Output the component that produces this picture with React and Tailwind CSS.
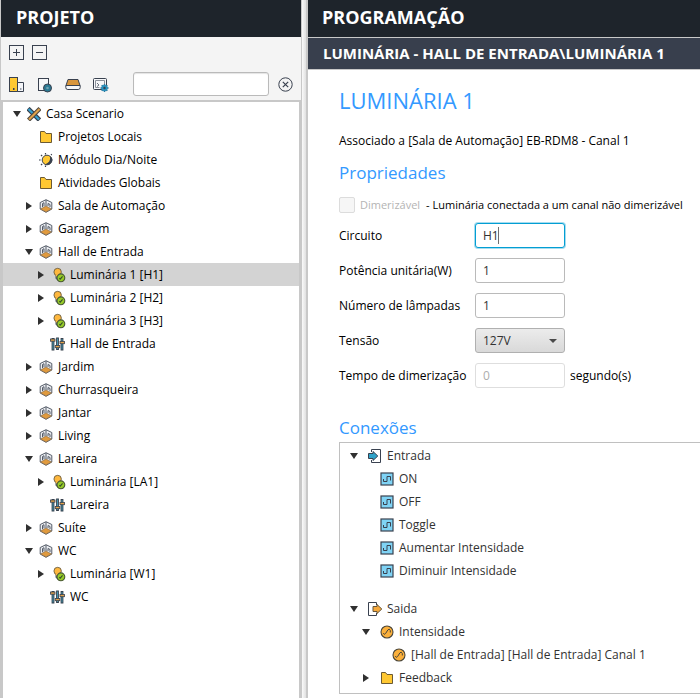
const T = "#303030";
const N = "#39414f";

function PlusBox({ minus }) {
  return (
    <svg width="15" height="15" viewBox="0 0 15 15" fill="none" stroke={N}>
      <rect x="0.5" y="0.5" width="14" height="14" />
      <path d={minus ? "M4 7.5h7" : "M4 7.5h7M7.5 4v7"} />
    </svg>
  );
}

function Buildings() {
  return (
    <svg width="16" height="16" viewBox="0 0 16 16" stroke={N}>
      <rect x="0.5" y="0.5" width="8" height="14" fill="#ffc832" />
      <path d="M8.5 5.5h6v9h-6z" fill="#f4f5f8" />
      <path d="M4 11h1.500v2h-1.500z" fill={N} stroke="none" />
      <path d="M11 11h1.500v2h-1.500z" fill="#9aa0aa" stroke="none" />
    </svg>
  );
}

function PageDisc() {
  return (
    <svg width="16" height="16" viewBox="0 0 16 16" stroke={N}>
      <rect x="1.5" y="1.5" width="10" height="12" fill="#f6f7f9" />
      <circle cx="10.500" cy="11" r="4" fill="#2b7a94" />
      <circle cx="10.500" cy="11" r="1.300" fill="#6fa3b3" stroke="none" />
    </svg>
  );
}

function Device() {
  return (
    <svg width="16" height="16" viewBox="0 0 16 16" stroke={N} strokeLinejoin="round">
      <path d="M3 2.500h10l2 6h-14z" fill="#d9963c" />
      <path d="M0.800 8.500h14.400v2q0 2-2 2h-10.400q-2 0-2-2z" fill="#f6f7f9" />
    </svg>
  );
}

function ScreenGear() {
  return (
    <svg width="16" height="16" viewBox="0 0 16 16" stroke={N}>
      <rect x="0.5" y="1.5" width="13" height="11" rx="1" fill="#f6f7f9" />
      <path d="M2.500 3.500h9v4M2.500 3.500v7h4" fill="none" stroke="#8b909a" />
      <path d="M4 6l2 2l-2 1.500" fill="none" stroke="#6b717c" />
      <path d="M11.500 7v8M7.500 11h8M8.700 8.200l5.600 5.600M14.300 8.200l-5.600 5.600" strokeWidth="1.500" stroke="#286f93" />
      <circle cx="11.500" cy="11" r="2.800" fill="#2b93be" stroke="#2b93be" />
      <circle cx="11.500" cy="11" r="1.200" fill={N} stroke="none" />
    </svg>
  );
}

function Clear() {
  return (
    <svg width="15" height="15" viewBox="0 0 15 15" fill="none" stroke={N}>
      <circle cx="7.5" cy="7.5" r="6.700" />
      <path d="M4.800 4.800l5.400 5.400M10.200 4.800l-5.400 5.400" strokeWidth="1.200" />
    </svg>
  );
}

function Tools() {
  return (
    <svg width="14" height="14" viewBox="0 0 14 14">
      <path d="M1 1.500l11.500 11.500" stroke="#37404d" strokeWidth="4.600" />
      <path d="M1.500 2l10.500 10.500" stroke="#35a0cf" strokeWidth="2.200" />
      <path d="M13 1.500l-11.500 11.500" stroke="#4c463e" strokeWidth="4.200" />
      <path d="M12.500 2l-10.500 10.500" stroke="#e0a24a" strokeWidth="2.200" />
    </svg>
  );
}

function Folder() {
  return (
    <svg width="14" height="14" viewBox="0 0 14 14">
      <path d="M1.500 1.500h4l1.500 2h5.500v9h-11z" fill="#ffc832" stroke="#6b5a34" />
    </svg>
  );
}

function Sun() {
  return (
    <svg width="14" height="14" viewBox="0 0 14 14">
      <circle cx="8" cy="7" r="4.800" fill="#ffc832" stroke={N} />
      <path d="M11 3q1 6-4.500 8.200q3 1.500 5.500-1t.800-5.400z" fill={N} />
      <path d="M0 7h1.600M2 2l1.200 1.200M2 12l1.200-1.200M6.500 0v1.500M6.500 12.500v1.500M12 2l.8-.8" stroke={N} strokeWidth="1.200" />
    </svg>
  );
}

function Room() {
  return (
    <svg width="14" height="14" viewBox="0 0 14 14" strokeLinejoin="round">
      <path d="M7 .7l5.800 2.800v6.500l-5.800 3.300l-5.800-3.300v-6.500z" fill="#eceef2" stroke="#555c68" />
      <path d="M7 7l5.600 3l-5.600 3l-5.600-3z" fill="#e09a3e" stroke="#7b6448" strokeWidth=".6" />
      <path d="M7 1v6M3.500 8v-3.500l1.500-.8v3.500M9 7v-2.500l2 1v2.500" fill="none" stroke="#555c68" />
    </svg>
  );
}

function Bulb() {
  return (
    <svg width="14" height="16" viewBox="0 0 14 16" className="ml-1">
      <path d="M3.200 8v3.500l2.800 3h3v-6.500z" fill="#77808c" stroke={N} strokeWidth=".9" />
      <circle cx="5" cy="4.800" r="4" fill="#ffb83e" stroke="#5f5540" strokeWidth=".9" />
      <path d="M3 7.500h4v2h-4z" fill="#ffb83e" />
      <circle cx="8.500" cy="11" r="4.200" fill="#96cc28" stroke="#4a5a34" strokeWidth="1.200" />
      <path d="M6.800 11.500l1 1l2.500-3" fill="none" stroke="#37502a" strokeWidth="1.200" />
    </svg>
  );
}

function Sliders() {
  return (
    <svg width="15" height="14" viewBox="0 0 15 14">
      <path d="M3 1v12.500M7.500 0.500v12.500M12 1v12.500" stroke="#37404d" strokeWidth="2.800" />
      <path d="M3 2v10.500M7.500 1.500v10.500M12 2v10.500" stroke="#4394ad" />
      <g fill="#e0a24a" stroke="#37404d" strokeWidth=".8">
        <rect x="0.500" y="2" width="4.500" height="2.200" />
        <rect x="5.200" y="8.500" width="4.600" height="2.200" />
        <rect x="10" y="4.500" width="4.500" height="2.200" />
      </g>
    </svg>
  );
}

function InArrow() {
  return (
    <svg width="14" height="14" viewBox="0 0 14 14">
      <path d="M3.500 3v-2.500h9v13h-9v-2.500" fill="#fff" stroke={N} />
      <path d="M.5 4.500h4.500v-2l4.800 4.500l-4.800 4.500v-2h-4.500z" fill="#2fa3c9" stroke={N} />
    </svg>
  );
}

function OutArrow() {
  return (
    <svg width="16" height="14" viewBox="0 0 16 14">
      <path d="M9.500 3v-2.500h-8v13h8v-2.500" fill="#fff" stroke={N} />
      <path d="M6 4.500h4v-2l4.800 4.500l-4.800 4.500v-2h-4z" fill="#f5a93c" stroke="#66563c" />
    </svg>
  );
}

function Digital() {
  return (
    <svg width="14" height="14" viewBox="0 0 14 14">
      <rect x="1" y="1" width="12" height="12" fill="#7fd3f5" stroke={N} strokeWidth="1.200" />
      <path d="M3.500 7v2.500h3.500v-5h3.500v4" fill="none" stroke={N} />
    </svg>
  );
}

function Analog() {
  return (
    <svg width="14" height="14" viewBox="0 0 14 14">
      <circle cx="7" cy="7" r="6" fill="#fbb03b" stroke="#4a4538" strokeWidth="1.100" />
      <path d="M3.300 8q1 2.500 2.300 .5l2.200-3.500q1.500-2 2.500 .5v2" fill="none" stroke="#4a4538" />
    </svg>
  );
}

function Arrow({ open }) {
  return (
    <svg width="8" height="8" viewBox="0 0 8 8" fill={T}>
      <path d={open ? "M0 1h8l-4 6z" : "M1 0l6 4l-6 4z"} />
    </svg>
  );
}

const ICONS = { tools: Tools, folder: Folder, sun: Sun, room: Room, bulb: Bulb, sliders: Sliders, in: InArrow, out: OutArrow, digital: Digital, analog: Analog };
const INDENT = ["pl-1.5", "pl-[18px]", "pl-[30px]"];

const PROJECT = [
  [0, "open", "tools", "Casa Scenario"],
  [1, "", "folder", "Projetos Locais"],
  [1, "", "sun", "Módulo Dia/Noite"],
  [1, "", "folder", "Atividades Globais"],
  [1, "closed", "room", "Sala de Automação"],
  [1, "closed", "room", "Garagem"],
  [1, "open", "room", "Hall de Entrada"],
  [2, "closed", "bulb", "Luminária 1 [H1]", true],
  [2, "closed", "bulb", "Luminária 2 [H2]"],
  [2, "closed", "bulb", "Luminária 3 [H3]"],
  [2, "", "sliders", "Hall de Entrada"],
  [1, "closed", "room", "Jardim"],
  [1, "closed", "room", "Churrasqueira"],
  [1, "closed", "room", "Jantar"],
  [1, "closed", "room", "Living"],
  [1, "open", "room", "Lareira"],
  [2, "closed", "bulb", "Luminária [LA1]"],
  [2, "", "sliders", "Lareira"],
  [1, "closed", "room", "Suíte"],
  [1, "open", "room", "WC"],
  [2, "closed", "bulb", "Luminária [W1]"],
  [2, "", "sliders", "WC"],
];

const INPUTS = [
  [0, "open", "in", "Entrada"],
  [1, "", "digital", "ON"],
  [1, "", "digital", "OFF"],
  [1, "", "digital", "Toggle"],
  [1, "", "digital", "Aumentar Intensidade"],
  [1, "", "digital", "Diminuir Intensidade"],
];

const OUTPUTS = [
  [0, "open", "out", "Saida"],
  [1, "open", "analog", "Intensidade"],
  [2, "", "analog", "[Hall de Entrada] [Hall de Entrada] Canal 1"],
  [1, "closed", "folder", "Feedback"],
];

function Tree({ rows, iconSlot }) {
  return (
    <ul>
      {rows.map(([level, state, icon, label, selected], i) => {
        const Icon = ICONS[icon];
        return (
          <li key={i} className={`flex h-[23px] items-center ${INDENT[level]} ${selected ? "bg-[#d3d3d3]" : ""}`}>
            <span className="flex w-4 shrink-0 justify-center">
              {state && (
                <button aria-label={label} className="block">
                  <Arrow open={state === "open"} />
                </button>
              )}
            </span>
            <span className={`flex shrink-0 justify-center ${iconSlot}`}>
              <Icon />
            </span>
            <span className="whitespace-nowrap">{label}</span>
          </li>
        );
      })}
    </ul>
  );
}

function Field({ id, label, children }) {
  return (
    <div className="flex h-[25px] items-center">
      <label htmlFor={id} className="w-[136px] shrink-0 whitespace-nowrap">{label}</label>
      {children}
    </div>
  );
}

const BOX = "h-[25px] w-[90px] shrink-0 rounded-[3px] border bg-white px-[7px] outline-none";

export default function App() {
  return (
    <div className="flex min-h-screen overflow-hidden bg-white font-['Open_Sans','Noto_Sans',sans-serif] text-[12px] leading-4 text-black">
      <aside className="flex w-[302px] shrink-0 flex-col border-x border-[#c8c8c8] bg-[#f4f4f4]">
        <h2 className="flex h-[37px] items-center bg-[#1e242b] pb-1 pl-[15px] text-[18px] font-bold text-white">PROJETO</h2>
        <div className="flex gap-2 px-2 pt-2">
          <button aria-label="Expandir"><PlusBox /></button>
          <button aria-label="Recolher"><PlusBox minus /></button>
        </div>
        <div className="flex h-[40px] items-center px-2 pt-2">
          <div className="flex gap-3 pt-0.5">
            <button aria-label="Projeto"><Buildings /></button>
            <button aria-label="Página"><PageDisc /></button>
            <button aria-label="Dispositivo"><Device /></button>
            <button aria-label="Tela"><ScreenGear /></button>
          </div>
          <input aria-label="Buscar" className="ml-6 h-6 min-w-0 flex-1 rounded-[3px] border border-[#bababa] bg-white px-2 shadow-[inset_0_1px_1px_#e4e4e4] outline-none" />
          <button aria-label="Limpar" className="ml-[9px]"><Clear /></button>
        </div>
        <div className="flex-1 border-x-2 border-t-2 border-[#c8c8c8] bg-white">
          <Tree rows={PROJECT} iconSlot="w-[21px] pr-1" />
        </div>
      </aside>
      <div className="w-1 shrink-0 bg-linear-to-r from-[#fafafa] to-[#e0e0e0]" />
      <main className="flex min-w-0 flex-1 flex-col border-l-2 border-[#c8c8c8]">
        <h2 className="flex h-[37px] shrink-0 items-center bg-[#1e242b] pb-1 pl-[14px] text-[18px] font-bold text-white">PROGRAMAÇÃO</h2>
        <h3 className="flex h-[33px] shrink-0 items-center whitespace-nowrap border-y border-[#c8c8c8] bg-[#383f4d] pb-0.5 pl-[15px] text-[15px] font-bold text-white">LUMINÁRIA - HALL DE ENTRADA\LUMINÁRIA 1</h3>
        <div className="flex flex-1 flex-col pl-[31px] pt-[15px]">
          <h1 className="text-[22px] leading-[30px] text-[#3399ff]">LUMINÁRIA 1</h1>
          <p className="mt-[18px] whitespace-nowrap">Associado a [Sala de Automação] EB-RDM8 - Canal 1</p>
          <h2 className="mt-3 text-[17px] leading-6 text-[#3399ff]">Propriedades</h2>
          <div className="mt-3 flex h-4 items-center whitespace-nowrap text-[11px]">
            <input id="dim" type="checkbox" disabled className="size-4 shrink-0 appearance-none rounded-[2px] border border-[#dcdcdc] bg-[#f6f6f6]" />
            <label htmlFor="dim" className="ml-[5px] text-[#b4b4b4]">Dimerizável</label>
            <span className="ml-1.5">- Luminária conectada a um canal não dimerizável</span>
          </div>
          <div className="mt-[10px] flex flex-col gap-[10px]">
            <Field id="circ" label="Circuito">
              <div className="relative">
                <input id="circ" defaultValue="H1" className={`${BOX} block border-[#039ed3] text-[#323232] ring-1 ring-[#a6dcef]`} />
                <span className="absolute left-[23px] top-1 h-[17px] w-px bg-[#707070]" />
              </div>
            </Field>
            <Field id="pot" label="Potência unitária(W)">
              <input id="pot" defaultValue="1" className={`${BOX} border-[#bababa] text-[#323232]`} />
            </Field>
            <Field id="num" label="Número de lâmpadas">
              <input id="num" defaultValue="1" className={`${BOX} border-[#bababa] text-[#323232]`} />
            </Field>
            <Field id="ten" label="Tensão">
              <div className="grid shrink-0 items-center">
                <select id="ten" className="col-start-1 row-start-1 h-[25px] w-[90px] appearance-none rounded-[3px] border border-[#b0b0b0] bg-linear-to-b from-[#ececec] to-[#d9d9d9] px-[7px] text-[#323232]">
                  <option>127V</option>
                </select>
                <svg className="pointer-events-none col-start-1 row-start-1 mr-2 justify-self-end" width="8" height="4" viewBox="0 0 8 4" fill="#4a4a4a"><path d="M0 0h8l-4 4z" /></svg>
              </div>
            </Field>
            <Field id="tempo" label="Tempo de dimerização">
              <input id="tempo" disabled defaultValue="0" className={`${BOX} border-[#dedede] text-[#adadad]`} />
              <span className="ml-[5px]">segundo(s)</span>
            </Field>
          </div>
          <h2 className="mt-7 text-[17px] leading-6 text-[#3399ff]">Conexões</h2>
          <div className="mt-[2px] border-y border-l border-[#c0c0c0] pt-px text-[#323232]">
            <Tree rows={INPUTS} iconSlot="w-[25px]" />
            <div className="pb-1 pt-[15px]">
              <Tree rows={OUTPUTS} iconSlot="w-[25px]" />
            </div>
          </div>
        </div>
      </main>
    </div>
  );
}
